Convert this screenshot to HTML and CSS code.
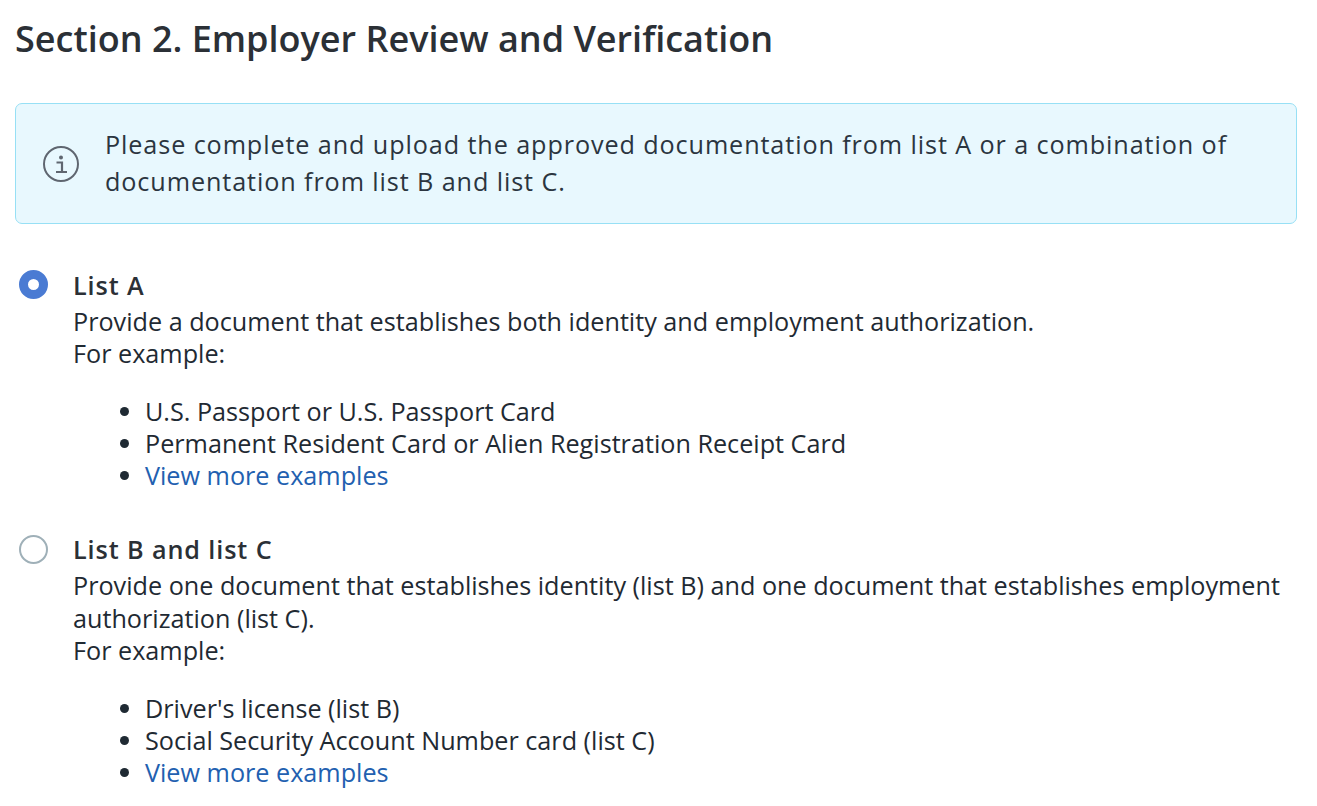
FILE: index.html
```html
<!DOCTYPE html>
<html lang="en">

<head>
  <meta charset="UTF-8">
  <title>Employer Review and Verification</title>
  <link rel="stylesheet" href="styles.css">
</head>

<body>
  <h1>Section 2. Employer Review and Verification</h1>

  <div class="alert">
    <svg class="alert-icon" viewBox="0 0 36 36" aria-hidden="true">
      <circle cx="18" cy="18" r="17" fill="none" stroke="#5f6670" stroke-width="2"/>
      <circle cx="18" cy="11.5" r="2" fill="#5f6670"/>
      <path d="M13.5 16.5h5.5v9M13 26h11" fill="none" stroke="#5f6670" stroke-width="2.2"/>
    </svg>
    <p>Please complete and upload the approved documentation from list A or a combination of documentation from list B and list C.</p>
  </div>

  <div class="option">
    <span class="radio checked"></span>
    <div class="option-body">
      <div class="option-title">List A</div>
      <p>Provide a document that establishes both identity and employment authorization.<br>For example:</p>
      <ul>
        <li>U.S. Passport or U.S. Passport Card</li>
        <li>Permanent Resident Card or Alien Registration Receipt Card</li>
        <li><a href="#">View more examples</a></li>
      </ul>
    </div>
  </div>

  <div class="option">
    <span class="radio"></span>
    <div class="option-body">
      <div class="option-title">List B and list C</div>
      <p>Provide one document that establishes identity (list B) and one document that establishes employment authorization (list C).<br>For example:</p>
      <ul>
        <li>Driver's license (list B)</li>
        <li>Social Security Account Number card (list C)</li>
        <li><a href="#">View more examples</a></li>
      </ul>
    </div>
  </div>
</body>

</html>
```

FILE: styles.css
```css
* {
  box-sizing: border-box;
}

html,
body {
  height: 100%;
}

body {
  margin: 0;
  padding: 14px 20px 0 15px;
  overflow: hidden;
  background: white;
  color: #1f2a33;
  font-family: "Open Sans", sans-serif;
  font-size: 25.2px;
  line-height: 32.4px;
}

h1 {
  margin: 0 0 39px;
  color: #2b3036;
  font-size: 36px;
  font-weight: 600;
  line-height: 50px;
}

.alert {
  display: flex;
  align-items: center;
  height: 121px;
  padding: 0 60px 0 27px;
  background: #e8f8fe;
  border: 1px solid #97e0f5;
  border-radius: 7px;
  color: #2b3540;
  letter-spacing: .9px;
  line-height: 37px;
}

.alert-icon {
  flex: none;
  width: 36px;
  height: 36px;
  margin-right: 26px;
}

.alert p {
  margin: 0 0 2px;
}

.option {
  display: flex;
  margin-top: 43px;
}

.option + .option {
  margin-top: 40px;
}

.radio {
  flex: none;
  width: 29px;
  height: 29px;
  margin: 4px 25px 0 4px;
  background: white;
  border: 2px solid #9fb0b8;
  border-radius: 50%;
}

.radio.checked {
  margin-top: 3px;
  background: white;
  border: 9px solid #4a7bd3;
}

.option-body {
  flex: 1;
}

.option-title {
  margin-bottom: 2px;
  color: #2b3036;
  font-weight: 600;
  letter-spacing: .9px;
  line-height: 36px;
}

.option-body p {
  margin: 0 0 25.5px;
}

ul {
  margin: 0;
  padding-left: 72px;
  line-height: 32px;
}

a {
  color: #2260b0;
  text-decoration: none;
}
```
